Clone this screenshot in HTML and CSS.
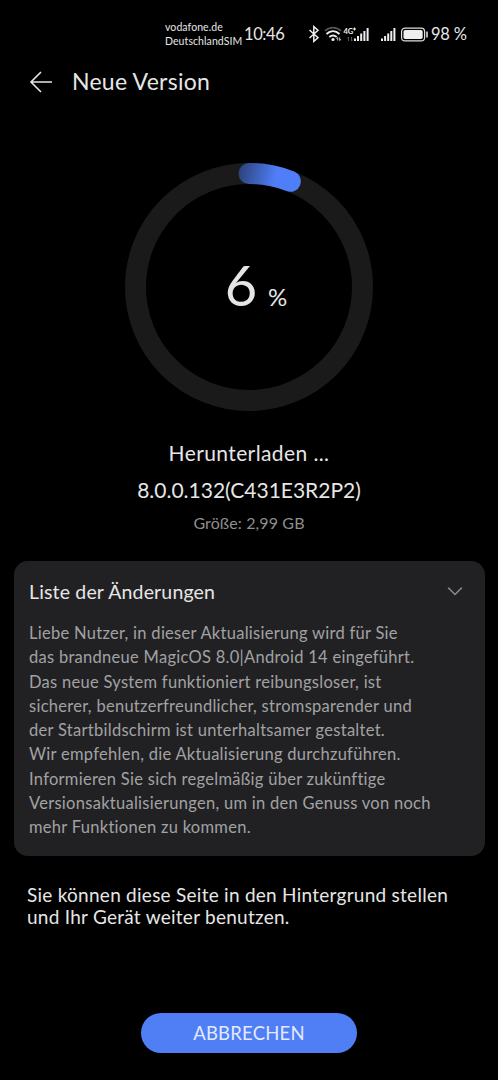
FILE: index.html
```
<!DOCTYPE html>
<html lang="de">
  <head>
    <meta charset="UTF-8" />
    <meta name="viewport" content="width=device-width, initial-scale=1.0" />
    <title>Neue Version</title>
    <link rel="stylesheet" href="styles.css">
  </head>
  <body>
    <div class="statusbar">
      <div class="carrier">
        <span>vodafone.de</span>
        <span>DeutschlandSIM</span>
      </div>
      <span class="time">10:46</span>
      <svg class="status-icons" width="122" height="20" viewBox="0 0 122 20" fill="none">
        <!-- bluetooth -->
        <path d="M1.5 6L10 13.8L5.8 17.3V2.7L10 6.2L1.5 14" stroke="#eee" stroke-width="1.5" />
        <!-- wifi -->
        <path d="M17 7C21.5 2.5 28.5 2.5 33 7" stroke="#555" stroke-width="1.6" />
        <path d="M18.5 10C22.5 6.3 27.5 6.3 31.5 10" stroke="#eee" stroke-width="1.9" />
        <path d="M21.3 13C23.7 11 26.3 11 28.7 13" stroke="#eee" stroke-width="1.8" />
        <circle cx="25" cy="15.5" r="1.6" fill="#eee" />
        <path d="M29.7 16.5V13.5M28.5 14.7L29.7 13.5M31.7 13.5V16.5M33 15.3L31.7 16.5" stroke="#ccc" stroke-width="1" />
        <!-- mobile data -->
        <text class="net" x="35.5" y="9.5">4G</text>
        <path d="M45 5H48M46.5 3.5V6.5" stroke="#eee" stroke-width="1.1" />
        <path d="M40.5 17V13M39.3 14.3L40.5 13M43.5 13V17M44.7 15.7L43.5 17" stroke="#555" stroke-width="1" />
        <g fill="#eee">
          <rect x="46" y="14.5" width="2" height="2.5" />
          <rect x="49" y="12" width="2" height="5" />
          <rect x="52.2" y="9.5" width="2" height="7.5" />
          <rect x="55.4" y="7" width="2" height="10" />
          <rect x="58.6" y="4" width="2" height="13" />
          <rect x="73" y="14.5" width="2" height="2.5" />
          <rect x="76.1" y="12" width="2" height="5" />
          <rect x="79.2" y="9.5" width="2" height="7.5" />
          <rect x="82.3" y="7" width="2" height="10" />
          <rect x="85.4" y="4" width="2" height="13" />
        </g>
        <!-- battery -->
        <rect x="93.6" y="4.1" width="23" height="12.8" rx="3.5" stroke="#ddd" stroke-width="1.2" />
        <rect x="95.5" y="6" width="19.2" height="9" rx="1.8" fill="#eee" />
        <path d="M119 7.5V13.5" stroke="#ddd" stroke-width="1.6" />
      </svg>
      <span class="battery">98 %</span>
    </div>

    <header class="titlebar">
      <svg width="24" height="24" viewBox="0 0 24 24" fill="none" stroke="#e6e6e6" stroke-width="1.6">
        <path d="M23 12H2M12 2L2 12L12 22" />
      </svg>
      <h1>Neue Version</h1>
    </header>

    <main>
      <div class="progress">
        <svg width="248" height="248" viewBox="0 0 248 248" fill="none">
          <defs>
            <linearGradient id="arc" gradientUnits="userSpaceOnUse" x1="114" y1="0" x2="152" y2="8">
              <stop offset="0" stop-color="#2a4076" />
              <stop offset="1" stop-color="#4f7ef8" />
            </linearGradient>
          </defs>
          <circle cx="124" cy="124" r="113.5" stroke="#1a1a1a" stroke-width="21" />
          <path d="M124 10.5A113.5 113.5 0 0 1 165.3 18.3" stroke="url(#arc)" stroke-width="21" stroke-linecap="round" />
        </svg>
        <p class="percent">6<small>%</small></p>
      </div>

      <h2 class="state">Herunterladen ...</h2>
      <p class="version">8.0.0.132(C431E3R2P2)</p>
      <p class="size">Größe: 2,99 GB</p>

      <section class="card">
        <div class="card-head">
          <h3>Liste der Änderungen</h3>
          <svg width="16" height="10" viewBox="0 0 16 10" fill="none" stroke="#8c8c8e" stroke-width="1.5" stroke-linecap="round">
            <path d="M1.5 2L8 8.5L14.5 2" />
          </svg>
        </div>
        <p class="changes">
          Liebe Nutzer, in dieser Aktualisierung wird für Sie<br>
          das brandneue MagicOS 8.0|Android 14 eingeführt.<br>
          Das neue System funktioniert reibungsloser, ist<br>
          sicherer, benutzerfreundlicher, stromsparender und<br>
          der Startbildschirm ist unterhaltsamer gestaltet.<br>
          Wir empfehlen, die Aktualisierung durchzuführen.<br>
          Informieren Sie sich regelmäßig über zukünftige<br>
          Versionsaktualisierungen, um in den Genuss von noch<br>
          mehr Funktionen zu kommen.
        </p>
      </section>

      <p class="hint">
        Sie können diese Seite in den Hintergrund stellen<br>
        und Ihr Gerät weiter benutzen.
      </p>
    </main>

    <button class="cancel">ABBRECHEN</button>
  </body>
</html>
```
FILE: styles.css
```
* {
  box-sizing: border-box;
  margin: 0;
  padding: 0;
}

body {
  height: 1080px;
  display: flex;
  flex-direction: column;
  font-family: Lato, "Noto Sans", sans-serif;
  color: #e6e6e6;
  background-color: #000;
  white-space: nowrap;
  overflow: hidden;
}

.statusbar {
  display: flex;
  align-items: center;
  height: 60px;
  padding: 8px 0 0 165px;
}

.carrier {
  display: flex;
  flex-direction: column;
  width: 79px;
  font-size: 10.5px;
  line-height: 14px;
  letter-spacing: 0.08px;
}

.time {
  width: 64px;
  font-size: 16.5px;
  letter-spacing: -0.4px;
}

.battery {
  margin-left: 1px;
  font-size: 16.5px;
  letter-spacing: -0.2px;
}

.net {
  font-size: 7.5px;
  font-weight: bold;
  fill: #eee;
}

.titlebar {
  display: flex;
  align-items: center;
  gap: 19px;
  height: 44px;
  padding-left: 29px;
}

.titlebar h1 {
  padding-bottom: 2px;
  font-size: 23px;
  font-weight: 400;
  letter-spacing: 0.25px;
}

main {
  flex: 1;
  text-align: center;
}

.progress {
  display: grid;
  place-items: center;
  width: 248px;
  height: 248px;
  margin: 59px auto 0;
}

.progress > * {
  grid-area: 1 / 1;
}

.percent {
  padding: 7px 0 0 14px;
  font-size: 56px;
  line-height: 60px;
}

.percent small {
  margin-left: 11px;
  font-size: 24px;
}

.state {
  margin-top: 28px;
  font-size: 21px;
  font-weight: 400;
  line-height: 28px;
  letter-spacing: 0.4px;
}

.version {
  margin-top: 9px;
  font-size: 21px;
  line-height: 28px;
}

.size {
  margin-top: 7px;
  font-size: 16px;
  line-height: 24px;
  letter-spacing: 0.12px;
  color: #8e8e8e;
}

.card {
  width: 471px;
  height: 295px;
  margin: 26px auto 0;
  padding: 16px 15.5px;
  border-radius: 14px;
  background-color: #212123;
  text-align: left;
}

.card-head {
  display: flex;
  align-items: center;
  justify-content: space-between;
  height: 28px;
  padding-right: 6px;
}

.card-head h3 {
  font-size: 19.5px;
  font-weight: 400;
  letter-spacing: 0.16px;
}

.changes {
  margin-top: 16px;
  font-size: 16.5px;
  line-height: 24.3px;
  letter-spacing: 0.28px;
  color: #a2a2a3;
}

.hint {
  margin: 28px 0 0 27px;
  font-size: 19px;
  line-height: 22px;
  letter-spacing: 0.26px;
  text-align: left;
}

.cancel {
  width: 216px;
  height: 40px;
  margin: 0 auto 27px;
  border: none;
  border-radius: 20px;
  font-family: inherit;
  font-size: 18.5px;
  letter-spacing: 0.2px;
  color: #e3eafd;
  background-color: #4f7ef5;
}
```
